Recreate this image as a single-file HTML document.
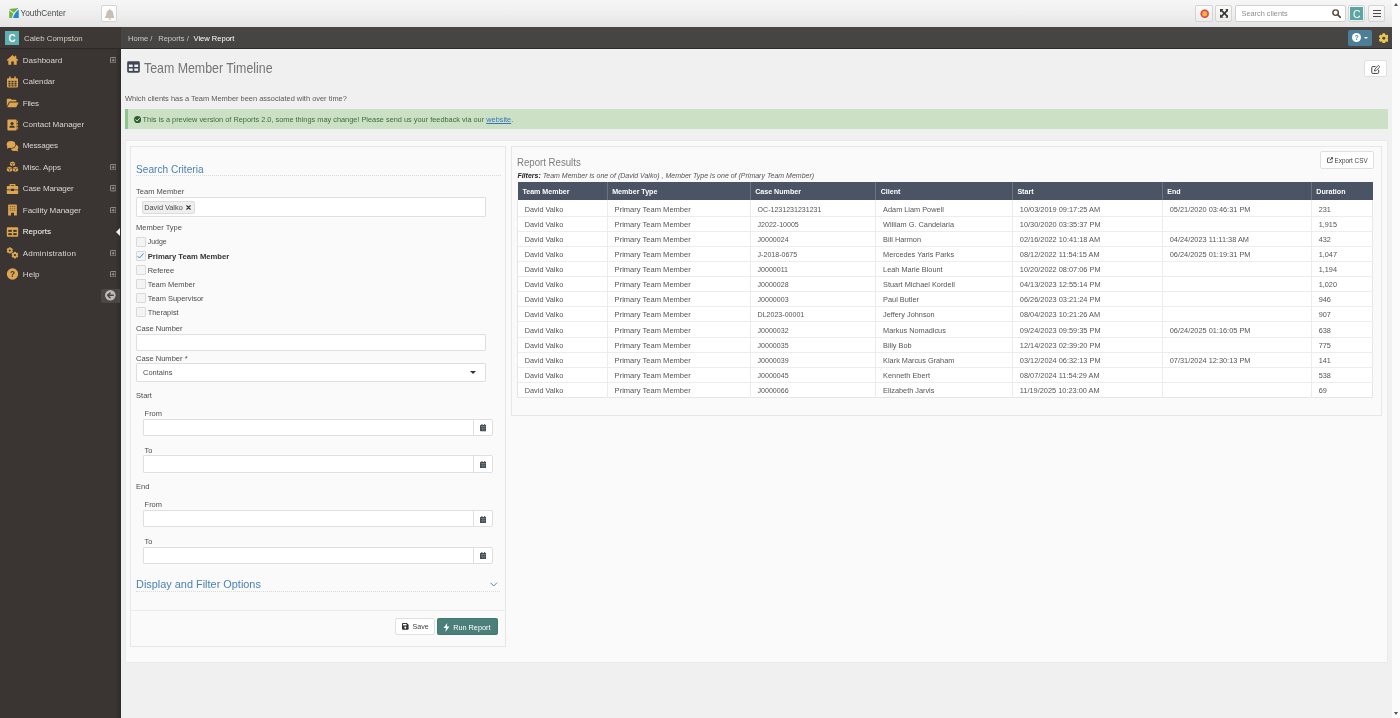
<!DOCTYPE html>
<html lang="en">
<head>
<meta charset="utf-8">
<title>Team Member Timeline</title>
<style>
*{box-sizing:border-box;margin:0;padding:0}
html,body{width:1400px;height:718px;overflow:hidden}
body{position:relative;will-change:transform;background:#f0f0f0;font-family:"Liberation Sans",sans-serif;font-size:7.4px;color:#4a4a4a;-webkit-font-smoothing:antialiased}
.abs{position:absolute}
.t{position:absolute;white-space:nowrap;line-height:1}
/* top bar */
#topbar{position:absolute;left:0;top:0;width:1392px;height:27px;background:linear-gradient(#f6f6f6,#efefef 50%,#e4e4e4)}
.tbtn{position:absolute;top:5px;height:16.5px;width:16.5px;border:1px solid #d4d4d4;border-radius:2px;background:linear-gradient(#fbfbfb,#ececec)}
/* sidebar */
#sidebar{position:absolute;left:0;top:27px;width:120.5px;height:691px;background:linear-gradient(90deg,#3a3532 0,#3a3532 116px,#2f2b29 120.5px)}
#userhdr{position:absolute;left:0;top:0;width:120.5px;height:21.5px;background:#3d3835;border-bottom:1px solid #2c2826}
.mi{position:absolute;left:22.8px;color:#d9d5d0;font-size:8.05px;white-space:nowrap;line-height:1}
.mi.act{color:#fff}
.ico{position:absolute;left:6px;width:13px;height:12px}
.plus{position:absolute;left:109.6px;width:6px;height:6px;border:1px solid #a9a49f;border-radius:1px}
.plus:before{content:"";position:absolute;left:0.5px;right:0.5px;top:1.5px;height:1px;background:#a9a49f}
.plus:after{content:"";position:absolute;top:0.5px;bottom:0.5px;left:1.5px;width:1px;background:#a9a49f}
/* breadcrumb */
#crumb{position:absolute;left:120.5px;top:27px;width:1271.5px;height:21.8px;background:#474543;border-bottom:1.5px solid #2d2b2a}
/* scrollbar */
#sb{position:absolute;left:1392px;top:0;width:8px;height:718px;background:#fbfbfb}
/* panels */
.panel{position:absolute;background:#fafafa;border:1px solid #e3e3e3}
.inp{position:absolute;background:#fff;border:1px solid #dfdfdf;border-radius:1px}
.lbl{position:absolute;white-space:nowrap;line-height:1;font-size:7.4px;color:#4c4c4c}
.cb{position:absolute;left:136px;width:9.5px;height:9.5px;border:1px solid #d9d9d9;background:#f4f4f4;border-radius:1px}
.calbtn{position:absolute;background:#fff;border:1px solid #dfdfdf;border-radius:0 2px 2px 0}
</style>
</head>
<body>
<div id="topbar">
<svg class="abs" style="left:8.7px;top:7.7px" width="9.9" height="9.9" viewBox="0 0 10 10"><path d="M0 1 L9.6 0 L5 4.7 Z" fill="#6cb33e"/><path d="M0.2 2.6 L4.4 5.6 L2.9 10 L0.2 10 Z" fill="#6cb33e"/><path d="M9.8 1.4 L9.9 10 L4.1 10 C4.8 6.6,7 3.6,9.8 1.4Z" fill="#1f8ad3"/></svg>
<div class="t" style="left:20.6px;top:9.6px;font-size:8.2px;color:#4a4a4a">YouthCenter</div>
<div class="tbtn" style="left:101px;top:5.2px;width:16.4px;height:16.4px;background:#fdfdfd"></div>
<svg class="abs" style="left:104.5px;top:8.6px" width="9.6" height="11" viewBox="0 0 448 512"><path fill="#c9bdb7" d="M224 0c-17.700 0-32 14.300-32 32v19.200C119 66 64 130.600 64 208v18.800c0 47-17.300 92.400-48.500 127.600l-7.400 8.300c-8.400 9.400-10.400 22.900-5.300 34.400S19.400 416 32 416h384c12.600 0 24-7.400 29.200-18.900s3.100-25-5.300-34.400l-7.400-8.300C401.300 319.200 384 273.900 384 226.800V208c0-77.400-55-142-128-156.800V32c0-17.700-14.300-32-32-32zm45.300 493.300c12-12 18.700-28.300 18.700-45.300H160c0 17 6.700 33.300 18.700 45.300s28.300 18.700 45.300 18.700s33.300-6.700 45.300-18.700z"/></svg>
<!-- right buttons -->
<div class="tbtn" style="left:1195.4px;width:17.3px"></div>
<svg class="abs" style="left:1199.5px;top:8.85px" width="9.4" height="9.4" viewBox="0 0 20 20"><circle cx="10" cy="10" r="10" fill="#cfe6ec"/><circle cx="10" cy="10" r="9" fill="#e2473b"/><circle cx="10" cy="10" r="5.6" fill="#f6a63c"/><path d="M15.5 5.2 C11 4.6,8 6.6,9 9.2 C10 11.6,12.4 11.4,11.4 13 C10.4 14.8,6.6 15.2,4.4 14.6 C8.6 16.6,12.8 14.6,12 11.4 C11.4 9,8.6 9.4,9.4 7.6 C10.2 6,13 5.4,15.5 5.2Z" fill="#fde9c8"/></svg>
<div class="tbtn" style="left:1215px;width:17.3px"></div>
<svg class="abs" style="left:1219.5px;top:9px" width="8.8" height="8.8" viewBox="0 0 16 16"><path d="M2.5 2.5 L13.5 13.5 M13.5 2.5 L2.5 13.5" stroke="#3a3632" stroke-width="3"/><g fill="#3a3632"><path d="M0 0 H6.4 L0 6.4Z"/><path d="M16 0 V6.4 L9.6 0Z"/><path d="M0 16 V9.6 L6.4 16Z"/><path d="M16 16 H9.6 L16 9.6Z"/></g></svg>
<div class="abs" style="left:1235.2px;top:5px;width:110.6px;height:16.5px;background:#fff;border:1px solid #d0d0d0;border-radius:2px"></div>
<div class="t" style="left:1241.5px;top:10.4px;font-size:7.36px;color:#8e8e8e">Search clients</div>
<svg class="abs" style="left:1332.1px;top:8.8px" width="9.2" height="9.2" viewBox="0 0 16 16"><circle cx="6.3" cy="6.3" r="4.8" fill="none" stroke="#54483c" stroke-width="2.5"/><path d="M10.2 10.2 L14.8 14.8" stroke="#54483c" stroke-width="2.9" stroke-linecap="round"/></svg>
<div class="tbtn" style="left:1348.1px"></div>
<div class="abs" style="left:1350.1px;top:7.1px;width:13.3px;height:13.4px;background:#5ba5a3"></div>
<div class="t" style="left:1353.2px;top:7.9px;font-size:11.6px;color:#fff;transform:scaleX(0.9);transform-origin:0 0">C</div>
<div class="tbtn" style="left:1368.3px"></div>
<div class="abs" style="left:1372.5px;top:9.7px;width:8px;height:1.2px;background:#4a4a4a"></div>
<div class="abs" style="left:1372.5px;top:12.8px;width:8px;height:1.2px;background:#4a4a4a"></div>
<div class="abs" style="left:1372.5px;top:15.9px;width:8px;height:1.2px;background:#4a4a4a"></div>
</div>
<div id="sidebar"><div id="userhdr">
<div class="abs" style="left:5.1px;top:4.1px;width:14.1px;height:14.1px;background:#5fb0b3"></div>
<div class="t" style="left:8.6px;top:6.6px;font-size:10px;font-weight:bold;color:#fff">C</div>
<div class="t" style="left:24px;top:7.5px;font-size:7.88px;color:#d6cec6">Caleb Compston</div>
</div>
<svg class="ico" style="left:5.8px;top:27.2px" width="11.6" height="11.6" viewBox="0 0 16 16"><path fill="#dea650" d="M8 1.2 L0.3 8 L1.4 9.2 L2.4 8.4 V14.4 H6.3 V10 H9.7 V14.4 H13.6 V8.4 L14.6 9.2 L15.7 8 L13 5.6 V2.2 H11.2 V4 Z"/></svg><div class="mi" style="top:30px;letter-spacing:0.013px">Dashboard</div><svg class="abs" style="left:110px;top:29.9px" width="6.4" height="6.4" viewBox="0 0 12 12"><rect x="0.9" y="0.9" width="10.2" height="10.2" rx="1.2" fill="none" stroke="#a9a49f" stroke-width="1.5"/><path d="M6 3.2 V8.8 M3.2 6 H8.8" stroke="#a9a49f" stroke-width="1.5"/></svg>
<svg class="ico" style="left:5.8px;top:48.5px" width="11.6" height="11.6" viewBox="0 0 16 16"><path fill="#dea650" d="M2 3 H14 A1.3 1.3 0 0 1 15.3 4.3 V14 A1.3 1.3 0 0 1 14 15.3 H2 A1.3 1.3 0 0 1 0.7 14 V4.3 A1.3 1.3 0 0 1 2 3Z M3.6 0.8 H5.6 V4 H3.6Z M10.4 0.8 H12.4 V4 H10.4Z"/><g fill="#3a3532"><rect x="2.6" y="6.4" width="2.7" height="2.1"/><rect x="6.65" y="6.4" width="2.7" height="2.1"/><rect x="10.7" y="6.4" width="2.7" height="2.1"/><rect x="2.6" y="9.3" width="2.7" height="2.1"/><rect x="6.65" y="9.3" width="2.7" height="2.1"/><rect x="10.7" y="9.3" width="2.7" height="2.1"/><rect x="2.6" y="12.2" width="2.7" height="1.8"/><rect x="6.65" y="12.2" width="2.7" height="1.8"/><rect x="10.7" y="12.2" width="2.7" height="1.8"/></g></svg><div class="mi" style="top:51px;letter-spacing:-0.072px">Calendar</div>
<svg class="ico" style="left:5.8px;top:70.0px" width="11.6" height="11.6" viewBox="0 0 16 16"><path fill="#dea650" d="M0.4 3.4 A1.2 1.2 0 0 1 1.6 2.2 H5.4 L7 3.8 H12 A1.2 1.2 0 0 1 13.2 5 V6 H4.6 A1.6 1.6 0 0 0 3.2 6.9 L0.4 12.2Z"/><path fill="#dea650" d="M4.4 7.2 H15.4 A0.6 0.6 0 0 1 15.9 8.1 L13.3 13 A1.4 1.4 0 0 1 12.1 13.8 H0.9 Z"/></svg><div class="mi" style="top:73px;letter-spacing:-0.219px">Files</div>
<svg class="ico" style="left:5.8px;top:91.6px" width="11.6" height="11.6" viewBox="0 0 16 16"><path fill="#dea650" d="M2.6 0.6 H12.2 A1.4 1.4 0 0 1 13.6 2 V14 A1.4 1.4 0 0 1 12.2 15.4 H2.6 A1.4 1.4 0 0 1 1.2 14 V2 A1.4 1.4 0 0 1 2.6 0.6Z M14.3 2.4 H15.4 V5.4 H14.3Z M14.3 6.5 H15.4 V9.5 H14.3Z M14.3 10.6 H15.4 V13.6 H14.3Z"/><circle cx="7.4" cy="6" r="2.1" fill="#3a3532"/><path fill="#3a3532" d="M3.8 11.8 A3.6 3 0 0 1 11 11.8 Z"/></svg><div class="mi" style="top:94px;letter-spacing:-0.024px">Contact Manager</div>
<svg class="ico" style="left:5.8px;top:112.9px" width="11.6" height="11.6" viewBox="0 0 16 16"><ellipse cx="6" cy="6" rx="5.8" ry="4.6" fill="#dea650"/><path fill="#dea650" d="M1.6 8 L0.4 11.6 L4.6 10Z"/><path fill="#dea650" d="M12.6 6.4 A4.6 4 0 0 1 15.8 10.4 A4 3.6 0 0 1 14.6 13 L15.7 15.4 L12.4 14.2 A5.2 4.2 0 0 1 5.6 11.6 A7 5.6 0 0 0 12.6 6.4Z"/></svg><div class="mi" style="top:115px;letter-spacing:-0.212px">Messages</div>
<svg class="ico" style="left:5.8px;top:134.2px" width="11.6" height="11.6" viewBox="0 0 16 16"><path fill="#dea650" d="M8 0.6 L11.4 1.9 V5.6 L8 7 L4.6 5.6 V1.9Z M4 7.6 L7.5 9 V13 L4 14.6 L0.5 13 V9Z M12 7.6 L15.5 9 V13 L12 14.6 L8.5 13 V9Z"/><path stroke="#3a3532" stroke-width="0.8" fill="none" d="M5 2.6 L8 3.8 L11 2.6 M8 3.8 V6.6 M1 9.6 L4 10.8 L7 9.6 M4 10.8 V14 M9 9.6 L12 10.8 L15 9.6 M12 10.8 V14"/></svg><div class="mi" style="top:137px;letter-spacing:-0.073px">Misc. Apps</div><svg class="abs" style="left:110px;top:136.9px" width="6.4" height="6.4" viewBox="0 0 12 12"><rect x="0.9" y="0.9" width="10.2" height="10.2" rx="1.2" fill="none" stroke="#a9a49f" stroke-width="1.5"/><path d="M6 3.2 V8.8 M3.2 6 H8.8" stroke="#a9a49f" stroke-width="1.5"/></svg>
<svg class="ico" style="left:5.8px;top:155.7px" width="11.6" height="11.6" viewBox="0 0 16 16"><path fill="#dea650" d="M5 1.4 H11 A1 1 0 0 1 12 2.4 V4 H14.6 A1 1 0 0 1 15.6 5 V8.6 H10 V7.8 H6 V8.6 H0.4 V5 A1 1 0 0 1 1.4 4 H4 V2.4 A1 1 0 0 1 5 1.4Z M5.8 3 V4 H10.2 V3Z M0.4 9.6 H6 V10.8 H10 V9.6 H15.6 V13.6 A1 1 0 0 1 14.6 14.6 H1.4 A1 1 0 0 1 0.4 13.6Z"/></svg><div class="mi" style="top:158px;letter-spacing:-0.176px">Case Manager</div><svg class="abs" style="left:110px;top:158.4px" width="6.4" height="6.4" viewBox="0 0 12 12"><rect x="0.9" y="0.9" width="10.2" height="10.2" rx="1.2" fill="none" stroke="#a9a49f" stroke-width="1.5"/><path d="M6 3.2 V8.8 M3.2 6 H8.8" stroke="#a9a49f" stroke-width="1.5"/></svg>
<svg class="ico" style="left:5.8px;top:177.1px" width="11.6" height="11.6" viewBox="0 0 16 16"><path fill="#dea650" d="M3.2 0.6 H12.8 A1 1 0 0 1 13.8 1.6 V15.4 H10 V11.6 H6 V15.4 H2.2 V1.6 A1 1 0 0 1 3.2 0.6Z"/><g fill="#3a3532" opacity="0.55"><rect x="4.2" y="2.4" width="2" height="1.4"/><rect x="7" y="2.4" width="2" height="1.4"/><rect x="9.8" y="2.4" width="2" height="1.4"/><rect x="4.2" y="5" width="2" height="1.4"/><rect x="7" y="5" width="2" height="1.4"/><rect x="9.8" y="5" width="2" height="1.4"/><rect x="4.2" y="7.6" width="2" height="1.4"/><rect x="7" y="7.6" width="2" height="1.4"/><rect x="9.8" y="7.6" width="2" height="1.4"/></g></svg><div class="mi" style="top:180px;letter-spacing:-0.054px">Facility Manager</div><svg class="abs" style="left:110px;top:179.8px" width="6.4" height="6.4" viewBox="0 0 12 12"><rect x="0.9" y="0.9" width="10.2" height="10.2" rx="1.2" fill="none" stroke="#a9a49f" stroke-width="1.5"/><path d="M6 3.2 V8.8 M3.2 6 H8.8" stroke="#a9a49f" stroke-width="1.5"/></svg>
<svg class="ico" style="left:5.8px;top:198.6px" width="11.6" height="11.6" viewBox="0 0 16 16"><path fill="#dea650" d="M1.8 1.6 H14.2 A1.4 1.4 0 0 1 15.6 3 V13 A1.4 1.4 0 0 1 14.2 14.4 H1.8 A1.4 1.4 0 0 1 0.4 13 V3 A1.4 1.4 0 0 1 1.8 1.6Z"/><g fill="#3a3532"><rect x="2.4" y="5.2" width="4.7" height="2.6"/><rect x="8.9" y="5.2" width="4.7" height="2.6"/><rect x="2.4" y="9.6" width="4.7" height="2.6"/><rect x="8.9" y="9.6" width="4.7" height="2.6"/></g></svg><div class="mi act" style="top:201px;letter-spacing:0.015px">Reports</div>
<svg class="ico" style="left:5.8px;top:220.0px" width="11.6" height="11.6" viewBox="0 0 16 16"><g fill="#dea650"><circle cx="4.4" cy="4.6" r="3.3"/><rect x="3.1" y="0.4" width="2.6" height="8.4" rx="0.6"/><rect x="3.1" y="0.4" width="2.6" height="8.4" rx="0.6" transform="rotate(60 4.4 4.6)"/><rect x="3.1" y="0.4" width="2.6" height="8.4" rx="0.6" transform="rotate(120 4.4 4.6)"/><circle cx="11.2" cy="10.8" r="3.6"/><rect x="9.8" y="6.2" width="2.8" height="9.2" rx="0.6"/><rect x="9.8" y="6.2" width="2.8" height="9.2" rx="0.6" transform="rotate(60 11.2 10.8)"/><rect x="9.8" y="6.2" width="2.8" height="9.2" rx="0.6" transform="rotate(120 11.2 10.8)"/></g><circle cx="4.4" cy="4.6" r="1.35" fill="#3a3532"/><circle cx="11.2" cy="10.8" r="1.55" fill="#3a3532"/></svg><div class="mi" style="top:223px;letter-spacing:0.164px">Administration</div><svg class="abs" style="left:110px;top:222.7px" width="6.4" height="6.4" viewBox="0 0 12 12"><rect x="0.9" y="0.9" width="10.2" height="10.2" rx="1.2" fill="none" stroke="#a9a49f" stroke-width="1.5"/><path d="M6 3.2 V8.8 M3.2 6 H8.8" stroke="#a9a49f" stroke-width="1.5"/></svg>
<svg class="ico" style="left:5.8px;top:241.3px" width="11.6" height="11.6" viewBox="0 0 16 16"><circle cx="8" cy="8" r="7.6" fill="#dea650"/><text x="8" y="12" font-family="Liberation Sans, sans-serif" font-size="11" font-weight="bold" text-anchor="middle" fill="#3a3532">?</text></svg><div class="mi" style="top:244px;letter-spacing:0.037px">Help</div><svg class="abs" style="left:110px;top:244.0px" width="6.4" height="6.4" viewBox="0 0 12 12"><rect x="0.9" y="0.9" width="10.2" height="10.2" rx="1.2" fill="none" stroke="#a9a49f" stroke-width="1.5"/><path d="M6 3.2 V8.8 M3.2 6 H8.8" stroke="#a9a49f" stroke-width="1.5"/></svg>
<div class="abs" style="left:116px;top:200.6px;width:0;height:0;border-top:4px solid transparent;border-bottom:4px solid transparent;border-right:4.5px solid #f0f0f0"></div>
<div class="abs" style="left:101.4px;top:261.7px;width:19.1px;height:14.7px;background:#4b4744;border-radius:2px 0 0 2px"></div>
<svg class="abs" style="left:105.3px;top:263.4px" width="10.6" height="10.6" viewBox="0 0 20 20"><circle cx="10" cy="10" r="10" fill="#bfbab5"/><path d="M15.5 10 H5.5 M9.5 5.5 L5 10 L9.5 14.5" stroke="#4b4744" stroke-width="2.8" fill="none" stroke-linecap="round" stroke-linejoin="round"/></svg>
</div>
<div id="crumb">
<div class="t" style="left:7.5px;top:8.1px;font-size:7.55px;color:#cfcac5">Home&nbsp;/</div><div class="t" style="left:37.7px;top:8.1px;font-size:7.55px;color:#cfcac5">Reports&nbsp;/</div><div class="t" style="left:73px;top:8.1px;font-size:7.55px;color:#fff">View Report</div>
<div class="abs" style="left:1227.4px;top:3.2px;width:24px;height:15.4px;background:#4c7f97;border-radius:2px"></div>
<div class="abs" style="left:1231.5px;top:6.4px;width:9px;height:9px;border-radius:50%;background:#fff"></div>
<div class="t" style="left:1234.2px;top:7.6px;font-size:6.6px;font-weight:bold;color:#4c7f97">?</div>
<div class="abs" style="left:1243.6px;top:10.4px;width:0;height:0;border-left:2px solid transparent;border-right:2px solid transparent;border-top:2.2px solid #fff"></div>
<svg class="abs" style="left:1258.3px;top:5.5px" width="9.6" height="10.6" viewBox="0 0 20 22"><g fill="#ecc650"><circle cx="10" cy="11" r="7.6"/><rect x="6.8" y="0.4" width="6.4" height="21.2" rx="1.6"/><rect x="6.8" y="0.4" width="6.4" height="21.2" rx="1.6" transform="rotate(60 10 11)"/><rect x="6.8" y="0.4" width="6.4" height="21.2" rx="1.6" transform="rotate(120 10 11)"/></g><circle cx="10" cy="11" r="3.1" fill="#474543"/></svg>
</div>
<div id="main">
<svg class="abs" style="left:127px;top:61.3px" width="13" height="12" viewBox="0 0 16 14.8"><path fill="#3f4552" d="M2 0.4 H14 A1.8 1.8 0 0 1 15.8 2.2 V12.6 A1.8 1.8 0 0 1 14 14.4 H2 A1.8 1.8 0 0 1 0.2 12.6 V2.2 A1.8 1.8 0 0 1 2 0.4Z"/><g fill="#f0f0f0"><rect x="2.3" y="4.4" width="4.7" height="3"/><rect x="9" y="4.4" width="4.7" height="3"/><rect x="2.3" y="9.2" width="4.7" height="3"/><rect x="9" y="9.2" width="4.7" height="3"/></g></svg>
<div class="t" style="left:144.4px;top:61.2px;font-size:14.2px;color:#747474;transform:scaleX(0.872);transform-origin:0 0">Team Member Timeline</div>
<div class="abs" style="left:1364.3px;top:60.3px;width:23.2px;height:17.2px;background:#fff;border:1px solid #e0e0e0;border-radius:2px"></div>
<svg class="abs" style="left:1371.2px;top:64.9px" width="9.2" height="9.2" viewBox="0 0 18 18"><path d="M8 3 H3.4 A1.9 1.9 0 0 0 1.5 4.9 V14.6 A1.9 1.9 0 0 0 3.4 16.5 H13.1 A1.9 1.9 0 0 0 15 14.6 V10" fill="none" stroke="#3c3c3c" stroke-width="1.9" stroke-linecap="round"/><path d="M13.2 1.6 A1.6 1.6 0 0 1 15.5 1.6 L16.4 2.5 A1.6 1.6 0 0 1 16.4 4.8 L10.2 11 L6.8 11.8 L7.5 8.3 Z" fill="none" stroke="#3c3c3c" stroke-width="1.7" stroke-linejoin="round"/></svg>
<div class="t" style="left:125px;top:94.8px;font-size:7.44px;color:#5a5a5a">Which clients has a Team Member been associated with over time?</div>
<div class="abs" style="left:125px;top:108.6px;width:1262.6px;height:20.8px;background:#cce0c5;border-left:3px solid #8dc68c"></div>
<svg class="abs" style="left:133.6px;top:115.9px" width="7.2" height="7.2" viewBox="0 0 16 16"><circle cx="8" cy="8" r="8" fill="#2d5e2f"/><path d="M4 8.4 L7 11.2 L12.2 5.4" stroke="#cce0c5" stroke-width="2.2" fill="none" stroke-linecap="round" stroke-linejoin="round"/></svg>
<div class="t" style="left:142.6px;top:116px;font-size:7.364px;color:#3d6b3f">This is a preview version of Reports 2.0, some things may change! Please send us your feedback via our <span style="color:#3a78b5;text-decoration:underline">website</span>.</div>
<div class="panel" style="left:125px;top:140.3px;width:1262.8px;height:522.6px;background:#fafafa;border-color:#ebebeb"></div>
<div class="panel" style="left:130.4px;top:145.8px;width:375.2px;height:501px;border-color:#e7e7e7"></div>
<div class="abs" style="left:131.4px;top:610px;width:373.2px;height:1px;background:#ececec"></div>
<div class="t" style="left:136px;top:164.4px;font-size:11.2px;color:#4a80b8;transform:scaleX(0.905);transform-origin:0 0">Search Criteria</div>
<div class="abs" style="left:136px;top:175.4px;width:364.6px;border-top:1px dotted #dadada"></div>
<div class="lbl" style="left:136px;top:188.4px;font-size:7.55px">Team Member</div>
<div class="inp" style="left:136px;top:197px;width:350.3px;height:19.6px"></div>
<div class="abs" style="left:141.6px;top:200.6px;width:53.2px;height:13px;background:#efefef;border:1px solid #dcdcdc;border-radius:2px"></div>
<div class="t" style="left:144.3px;top:203.5px;font-size:7.3px;color:#4a4a4a">David Valko</div>
<svg class="abs" style="left:185.6px;top:204.6px" width="5" height="5" viewBox="0 0 10 10"><path d="M1.5 1.5 L8.5 8.5 M8.5 1.5 L1.5 8.5" stroke="#333" stroke-width="2.2" stroke-linecap="round"/></svg>
<div class="lbl" style="left:136px;top:224px;font-size:7.55px">Member Type</div>
<div class="cb" style="top:237.0px"></div>
<div class="lbl" style="left:147.7px;top:238.4px;font-size:7.0px">Judge</div>
<div class="cb" style="top:251.2px"></div>
<svg class="abs" style="left:137.4px;top:252.8px" width="7" height="6" viewBox="0 0 14 12"><path d="M1.5 6.5 L5 10 L12.5 1.5" stroke="#3f7fc4" stroke-width="1.8" fill="none" stroke-linecap="round" stroke-linejoin="round"/></svg>
<div class="lbl" style="left:147.7px;top:252.6px;font-weight:bold;font-size:7.66px;color:#333">Primary Team Member</div>
<div class="cb" style="top:265.1px"></div>
<div class="lbl" style="left:147.7px;top:266.5px;font-size:7.45px">Referee</div>
<div class="cb" style="top:279.1px"></div>
<div class="lbl" style="left:147.7px;top:280.5px;font-size:7.45px">Team Member</div>
<div class="cb" style="top:293.2px"></div>
<div class="lbl" style="left:147.7px;top:294.6px;font-size:7.45px">Team Supervisor</div>
<div class="cb" style="top:307.2px"></div>
<div class="lbl" style="left:147.7px;top:308.6px;font-size:7.45px">Therapist</div>
<div class="lbl" style="left:136px;top:324.5px;font-size:7.55px">Case Number</div>
<div class="inp" style="left:136px;top:334px;width:350.3px;height:17.2px"></div>
<div class="lbl" style="left:136px;top:354.6px;font-size:7.55px">Case Number *</div>
<div class="inp" style="left:136px;top:363.4px;width:350.3px;height:18.7px"></div>
<div class="lbl" style="left:143.1px;top:368.6px;font-size:7.45px">Contains</div>
<div class="abs" style="left:470px;top:370.5px;width:0;height:0;border-left:3.1px solid transparent;border-right:3.1px solid transparent;border-top:3.3px solid #333"></div>
<div class="lbl" style="left:136px;top:391.9px;font-size:7.55px">Start</div>
<div class="lbl" style="left:144.6px;top:409.9px;font-size:7.45px">From</div>
<div class="inp" style="left:142.9px;top:418.9px;width:331.2px;height:17.2px;border-radius:1px 0 0 1px"></div>
<div class="calbtn" style="left:473.1px;top:418.9px;width:20px;height:17.2px"></div>
<svg class="abs" style="left:479.9px;top:424.3px" width="6.6" height="7.3" viewBox="0 0 12 13.2"><path fill="#444a52" d="M1.2 1.6 H10.8 A1.2 1.2 0 0 1 12 2.8 V12 A1.2 1.2 0 0 1 10.8 13.2 H1.2 A1.2 1.2 0 0 1 0 12 V2.8 A1.2 1.2 0 0 1 1.2 1.6Z M2.6 0 H4.4 V2.4 H2.6Z M7.6 0 H9.4 V2.4 H7.6Z"/><rect x="1.6" y="4.4" width="8.8" height="0.9" fill="#fff" opacity="0.55"/><path d="M1.6 8.6 H10.4 M4.4 5.6 V11.8 M7.6 5.6 V11.8" stroke="#fff" stroke-width="0.7" opacity="0.45"/></svg>
<div class="lbl" style="left:144.6px;top:446.8px;font-size:7.45px">To</div>
<div class="inp" style="left:142.9px;top:455.2px;width:331.2px;height:17.6px;border-radius:1px 0 0 1px"></div>
<div class="calbtn" style="left:473.1px;top:455.2px;width:20px;height:17.6px"></div>
<svg class="abs" style="left:479.9px;top:461.1px" width="6.6" height="7.3" viewBox="0 0 12 13.2"><path fill="#444a52" d="M1.2 1.6 H10.8 A1.2 1.2 0 0 1 12 2.8 V12 A1.2 1.2 0 0 1 10.8 13.2 H1.2 A1.2 1.2 0 0 1 0 12 V2.8 A1.2 1.2 0 0 1 1.2 1.6Z M2.6 0 H4.4 V2.4 H2.6Z M7.6 0 H9.4 V2.4 H7.6Z"/><rect x="1.6" y="4.4" width="8.8" height="0.9" fill="#fff" opacity="0.55"/><path d="M1.6 8.6 H10.4 M4.4 5.6 V11.8 M7.6 5.6 V11.8" stroke="#fff" stroke-width="0.7" opacity="0.45"/></svg>
<div class="lbl" style="left:136px;top:483.1px;font-size:7.55px">End</div>
<div class="lbl" style="left:144.6px;top:500.5px;font-size:7.45px">From</div>
<div class="inp" style="left:142.9px;top:510.3px;width:331.2px;height:17.2px;border-radius:1px 0 0 1px"></div>
<div class="calbtn" style="left:473.1px;top:510.3px;width:20px;height:17.2px"></div>
<svg class="abs" style="left:479.9px;top:515.7px" width="6.6" height="7.3" viewBox="0 0 12 13.2"><path fill="#444a52" d="M1.2 1.6 H10.8 A1.2 1.2 0 0 1 12 2.8 V12 A1.2 1.2 0 0 1 10.8 13.2 H1.2 A1.2 1.2 0 0 1 0 12 V2.8 A1.2 1.2 0 0 1 1.2 1.6Z M2.6 0 H4.4 V2.4 H2.6Z M7.6 0 H9.4 V2.4 H7.6Z"/><rect x="1.6" y="4.4" width="8.8" height="0.9" fill="#fff" opacity="0.55"/><path d="M1.6 8.6 H10.4 M4.4 5.6 V11.8 M7.6 5.6 V11.8" stroke="#fff" stroke-width="0.7" opacity="0.45"/></svg>
<div class="lbl" style="left:144.6px;top:537.6px;font-size:7.45px">To</div>
<div class="inp" style="left:142.9px;top:546.6px;width:331.2px;height:17.2px;border-radius:1px 0 0 1px"></div>
<div class="calbtn" style="left:473.1px;top:546.6px;width:20px;height:17.2px"></div>
<svg class="abs" style="left:479.9px;top:552.0px" width="6.6" height="7.3" viewBox="0 0 12 13.2"><path fill="#444a52" d="M1.2 1.6 H10.8 A1.2 1.2 0 0 1 12 2.8 V12 A1.2 1.2 0 0 1 10.8 13.2 H1.2 A1.2 1.2 0 0 1 0 12 V2.8 A1.2 1.2 0 0 1 1.2 1.6Z M2.6 0 H4.4 V2.4 H2.6Z M7.6 0 H9.4 V2.4 H7.6Z"/><rect x="1.6" y="4.4" width="8.8" height="0.9" fill="#fff" opacity="0.55"/><path d="M1.6 8.6 H10.4 M4.4 5.6 V11.8 M7.6 5.6 V11.8" stroke="#fff" stroke-width="0.7" opacity="0.45"/></svg>
<div class="t" style="left:136.2px;top:578.8px;font-size:11.2px;color:#4a80b8;transform:scaleX(0.975);transform-origin:0 0">Display and Filter Options</div>
<div class="abs" style="left:136px;top:590.8px;width:364px;border-top:1px dotted #dadada"></div>
<svg class="abs" style="left:490.4px;top:581.6px" width="7.4" height="5" viewBox="0 0 15 10"><path d="M1.5 2 L7.5 8 L13.5 2" stroke="#4a80b8" stroke-width="2" fill="none" stroke-linecap="round" stroke-linejoin="round"/></svg>
<div class="abs" style="left:395.4px;top:618px;width:39.2px;height:17.2px;background:#fff;border:1px solid #e0e0e0;border-radius:2px"></div>
<svg class="abs" style="left:402.2px;top:623.2px" width="6.6" height="6.8" viewBox="0 0 14 14"><path fill="#333" d="M1.6 0 H10.4 L14 3.4 V12.4 A1.6 1.6 0 0 1 12.4 14 H1.6 A1.6 1.6 0 0 1 0 12.4 V1.6 A1.6 1.6 0 0 1 1.6 0Z"/><rect x="2.2" y="1.8" width="7.4" height="3.2" fill="#fff"/><circle cx="7" cy="9.6" r="2.2" fill="#fff"/></svg>
<div class="t" style="left:412.6px;top:624px;font-size:7.1px;color:#444">Save</div>
<div class="abs" style="left:436.9px;top:618px;width:61.2px;height:17.2px;background:#4b7f7a;border:1px solid #457771;border-radius:1.5px"></div>
<svg class="abs" style="left:443.4px;top:622.5px" width="7" height="9" viewBox="0 0 11 15"><path fill="#fff" d="M6.8 0 L0.6 8.4 H4.8 L3.4 15 L10.4 5.8 H6 Z"/></svg>
<div class="t" style="left:453.2px;top:623.6px;font-size:7.3px;color:#fff">Run Report</div>
<div class="panel" style="left:511px;top:145.8px;width:871.2px;height:270.2px;border-color:#e7e7e7"></div>
<div class="t" style="left:517.3px;top:156.6px;font-size:10.6px;color:#7c7c7c;transform:scaleX(0.91);transform-origin:0 0">Report Results</div>
<div class="t" style="left:517.4px;top:172.1px;font-size:7.0px;font-style:italic;color:#555"><b style="color:#222">Filters:</b> Team Member is one of (David Valko) , Member Type is one of (Primary Team Member)</div>
<div class="abs" style="left:1320.4px;top:151.4px;width:53.3px;height:17.4px;background:#fff;border:1px solid #e0e0e0;border-radius:2px"></div>
<svg class="abs" style="left:1326.5px;top:157px" width="6.2" height="6.2" viewBox="0 0 14 14"><path d="M6 2.4 H2.6 A1.4 1.4 0 0 0 1.2 3.8 V11.4 A1.4 1.4 0 0 0 2.6 12.8 H10.2 A1.4 1.4 0 0 0 11.6 11.4 V8.4" fill="none" stroke="#333" stroke-width="1.8"/><path d="M8 0.6 H13.4 V6 L11.4 4 L7.2 8.2 L5.8 6.8 L10 2.6Z" fill="#333"/></svg>
<div class="t" style="left:1334.5px;top:157.8px;font-size:6.35px;color:#444">Export CSV</div>
<div class="abs" style="left:517.6px;top:182px;width:855.7px;height:18.4px;background:#4a5464"></div>
<div class="t" style="left:522.4px;top:188.7px;font-size:7.1px;font-weight:bold;color:#fff">Team Member</div>
<div class="t" style="left:612.2px;top:188.7px;font-size:7.1px;font-weight:bold;color:#fff">Member Type</div>
<div class="abs" style="left:606.9px;top:182px;width:1px;height:18.4px;background:#6b7280"></div>
<div class="t" style="left:755.2px;top:188.7px;font-size:7.1px;font-weight:bold;color:#fff">Case Number</div>
<div class="abs" style="left:749.9px;top:182px;width:1px;height:18.4px;background:#6b7280"></div>
<div class="t" style="left:880.7px;top:188.7px;font-size:7.1px;font-weight:bold;color:#fff">Client</div>
<div class="abs" style="left:875.4px;top:182px;width:1px;height:18.4px;background:#6b7280"></div>
<div class="t" style="left:1017.4px;top:188.7px;font-size:7.1px;font-weight:bold;color:#fff">Start</div>
<div class="abs" style="left:1012.1px;top:182px;width:1px;height:18.4px;background:#6b7280"></div>
<div class="t" style="left:1167.3px;top:188.7px;font-size:7.1px;font-weight:bold;color:#fff">End</div>
<div class="abs" style="left:1162.0px;top:182px;width:1px;height:18.4px;background:#6b7280"></div>
<div class="t" style="left:1316.3px;top:188.7px;font-size:7.1px;font-weight:bold;color:#fff">Duration</div>
<div class="abs" style="left:1311.0px;top:182px;width:1px;height:18.4px;background:#6b7280"></div>
<div class="abs" style="left:517px;top:200.4px;width:856.4px;height:197.6px;background:#fff;border:1px solid #e6e6e6;border-top:none"></div>
<div class="abs" style="left:606.9px;top:200.4px;width:1px;height:197.4px;background:#ececec"></div>
<div class="abs" style="left:749.9px;top:200.4px;width:1px;height:197.4px;background:#ececec"></div>
<div class="abs" style="left:875.4px;top:200.4px;width:1px;height:197.4px;background:#ececec"></div>
<div class="abs" style="left:1012.1px;top:200.4px;width:1px;height:197.4px;background:#ececec"></div>
<div class="abs" style="left:1162.0px;top:200.4px;width:1px;height:197.4px;background:#ececec"></div>
<div class="abs" style="left:1311.0px;top:200.4px;width:1px;height:197.4px;background:#ececec"></div>
<div class="abs" style="left:517.6px;top:215.7px;width:855.7px;height:1px;background:#ededed"></div>
<div class="t" style="left:524.8px;top:205.70px;font-size:7.3px;color:#555">David Valko</div>
<div class="t" style="left:614.6px;top:205.70px;font-size:7.55px;color:#555">Primary Team Member</div>
<div class="t" style="left:757.6px;top:205.70px;font-size:7.05px;color:#555">OC-1231231231231</div>
<div class="t" style="left:883.1px;top:205.70px;font-size:7.33px;color:#555">Adam Liam Powell</div>
<div class="t" style="left:1019.8px;top:205.70px;font-size:7.38px;color:#555">10/03/2019 09:17:25 AM</div>
<div class="t" style="left:1169.7px;top:205.70px;font-size:7.38px;color:#555">05/21/2020 03:46:31 PM</div>
<div class="t" style="left:1318.7px;top:205.70px;font-size:7.3px;color:#555">231</div>
<div class="abs" style="left:517.6px;top:230.8px;width:855.7px;height:1px;background:#ededed"></div>
<div class="t" style="left:524.8px;top:220.81px;font-size:7.3px;color:#555">David Valko</div>
<div class="t" style="left:614.6px;top:220.81px;font-size:7.55px;color:#555">Primary Team Member</div>
<div class="t" style="left:757.6px;top:220.81px;font-size:7.05px;color:#555">J2022-10005</div>
<div class="t" style="left:883.1px;top:220.81px;font-size:7.33px;color:#555">William G. Candelaria</div>
<div class="t" style="left:1019.8px;top:220.81px;font-size:7.38px;color:#555">10/30/2020 03:35:37 PM</div>
<div class="t" style="left:1318.7px;top:220.81px;font-size:7.3px;color:#555">1,915</div>
<div class="abs" style="left:517.6px;top:245.9px;width:855.7px;height:1px;background:#ededed"></div>
<div class="t" style="left:524.8px;top:235.92px;font-size:7.3px;color:#555">David Valko</div>
<div class="t" style="left:614.6px;top:235.92px;font-size:7.55px;color:#555">Primary Team Member</div>
<div class="t" style="left:757.6px;top:235.92px;font-size:7.05px;color:#555">J0000024</div>
<div class="t" style="left:883.1px;top:235.92px;font-size:7.33px;color:#555">Bill Harmon</div>
<div class="t" style="left:1019.8px;top:235.92px;font-size:7.38px;color:#555">02/16/2022 10:41:18 AM</div>
<div class="t" style="left:1169.7px;top:235.92px;font-size:7.38px;color:#555">04/24/2023 11:11:38 AM</div>
<div class="t" style="left:1318.7px;top:235.92px;font-size:7.3px;color:#555">432</div>
<div class="abs" style="left:517.6px;top:261.0px;width:855.7px;height:1px;background:#ededed"></div>
<div class="t" style="left:524.8px;top:251.03px;font-size:7.3px;color:#555">David Valko</div>
<div class="t" style="left:614.6px;top:251.03px;font-size:7.55px;color:#555">Primary Team Member</div>
<div class="t" style="left:757.6px;top:251.03px;font-size:7.05px;color:#555">J-2018-0675</div>
<div class="t" style="left:883.1px;top:251.03px;font-size:7.33px;color:#555">Mercedes Yaris Parks</div>
<div class="t" style="left:1019.8px;top:251.03px;font-size:7.38px;color:#555">08/12/2022 11:54:15 AM</div>
<div class="t" style="left:1169.7px;top:251.03px;font-size:7.38px;color:#555">06/24/2025 01:19:31 PM</div>
<div class="t" style="left:1318.7px;top:251.03px;font-size:7.3px;color:#555">1,047</div>
<div class="abs" style="left:517.6px;top:276.1px;width:855.7px;height:1px;background:#ededed"></div>
<div class="t" style="left:524.8px;top:266.14px;font-size:7.3px;color:#555">David Valko</div>
<div class="t" style="left:614.6px;top:266.14px;font-size:7.55px;color:#555">Primary Team Member</div>
<div class="t" style="left:757.6px;top:266.14px;font-size:7.05px;color:#555">J0000011</div>
<div class="t" style="left:883.1px;top:266.14px;font-size:7.33px;color:#555">Leah Marie Blount</div>
<div class="t" style="left:1019.8px;top:266.14px;font-size:7.38px;color:#555">10/20/2022 08:07:06 PM</div>
<div class="t" style="left:1318.7px;top:266.14px;font-size:7.3px;color:#555">1,194</div>
<div class="abs" style="left:517.6px;top:291.2px;width:855.7px;height:1px;background:#ededed"></div>
<div class="t" style="left:524.8px;top:281.25px;font-size:7.3px;color:#555">David Valko</div>
<div class="t" style="left:614.6px;top:281.25px;font-size:7.55px;color:#555">Primary Team Member</div>
<div class="t" style="left:757.6px;top:281.25px;font-size:7.05px;color:#555">J0000028</div>
<div class="t" style="left:883.1px;top:281.25px;font-size:7.33px;color:#555">Stuart Michael Kordell</div>
<div class="t" style="left:1019.8px;top:281.25px;font-size:7.38px;color:#555">04/13/2023 12:55:14 PM</div>
<div class="t" style="left:1318.7px;top:281.25px;font-size:7.3px;color:#555">1,020</div>
<div class="abs" style="left:517.6px;top:306.3px;width:855.7px;height:1px;background:#ededed"></div>
<div class="t" style="left:524.8px;top:296.36px;font-size:7.3px;color:#555">David Valko</div>
<div class="t" style="left:614.6px;top:296.36px;font-size:7.55px;color:#555">Primary Team Member</div>
<div class="t" style="left:757.6px;top:296.36px;font-size:7.05px;color:#555">J0000003</div>
<div class="t" style="left:883.1px;top:296.36px;font-size:7.33px;color:#555">Paul Butler</div>
<div class="t" style="left:1019.8px;top:296.36px;font-size:7.38px;color:#555">06/26/2023 03:21:24 PM</div>
<div class="t" style="left:1318.7px;top:296.36px;font-size:7.3px;color:#555">946</div>
<div class="abs" style="left:517.6px;top:321.4px;width:855.7px;height:1px;background:#ededed"></div>
<div class="t" style="left:524.8px;top:311.47px;font-size:7.3px;color:#555">David Valko</div>
<div class="t" style="left:614.6px;top:311.47px;font-size:7.55px;color:#555">Primary Team Member</div>
<div class="t" style="left:757.6px;top:311.47px;font-size:7.05px;color:#555">DL2023-00001</div>
<div class="t" style="left:883.1px;top:311.47px;font-size:7.33px;color:#555">Jeffery Johnson</div>
<div class="t" style="left:1019.8px;top:311.47px;font-size:7.38px;color:#555">08/04/2023 10:21:26 AM</div>
<div class="t" style="left:1318.7px;top:311.47px;font-size:7.3px;color:#555">907</div>
<div class="abs" style="left:517.6px;top:336.5px;width:855.7px;height:1px;background:#ededed"></div>
<div class="t" style="left:524.8px;top:326.58px;font-size:7.3px;color:#555">David Valko</div>
<div class="t" style="left:614.6px;top:326.58px;font-size:7.55px;color:#555">Primary Team Member</div>
<div class="t" style="left:757.6px;top:326.58px;font-size:7.05px;color:#555">J0000032</div>
<div class="t" style="left:883.1px;top:326.58px;font-size:7.33px;color:#555">Markus Nomadicus</div>
<div class="t" style="left:1019.8px;top:326.58px;font-size:7.38px;color:#555">09/24/2023 09:59:35 PM</div>
<div class="t" style="left:1169.7px;top:326.58px;font-size:7.38px;color:#555">06/24/2025 01:16:05 PM</div>
<div class="t" style="left:1318.7px;top:326.58px;font-size:7.3px;color:#555">638</div>
<div class="abs" style="left:517.6px;top:351.6px;width:855.7px;height:1px;background:#ededed"></div>
<div class="t" style="left:524.8px;top:341.69px;font-size:7.3px;color:#555">David Valko</div>
<div class="t" style="left:614.6px;top:341.69px;font-size:7.55px;color:#555">Primary Team Member</div>
<div class="t" style="left:757.6px;top:341.69px;font-size:7.05px;color:#555">J0000035</div>
<div class="t" style="left:883.1px;top:341.69px;font-size:7.33px;color:#555">Billy Bob</div>
<div class="t" style="left:1019.8px;top:341.69px;font-size:7.38px;color:#555">12/14/2023 02:39:20 PM</div>
<div class="t" style="left:1318.7px;top:341.69px;font-size:7.3px;color:#555">775</div>
<div class="abs" style="left:517.6px;top:366.7px;width:855.7px;height:1px;background:#ededed"></div>
<div class="t" style="left:524.8px;top:356.80px;font-size:7.3px;color:#555">David Valko</div>
<div class="t" style="left:614.6px;top:356.80px;font-size:7.55px;color:#555">Primary Team Member</div>
<div class="t" style="left:757.6px;top:356.80px;font-size:7.05px;color:#555">J0000039</div>
<div class="t" style="left:883.1px;top:356.80px;font-size:7.33px;color:#555">Klark Marcus Graham</div>
<div class="t" style="left:1019.8px;top:356.80px;font-size:7.38px;color:#555">03/12/2024 06:32:13 PM</div>
<div class="t" style="left:1169.7px;top:356.80px;font-size:7.38px;color:#555">07/31/2024 12:30:13 PM</div>
<div class="t" style="left:1318.7px;top:356.80px;font-size:7.3px;color:#555">141</div>
<div class="abs" style="left:517.6px;top:381.8px;width:855.7px;height:1px;background:#ededed"></div>
<div class="t" style="left:524.8px;top:371.91px;font-size:7.3px;color:#555">David Valko</div>
<div class="t" style="left:614.6px;top:371.91px;font-size:7.55px;color:#555">Primary Team Member</div>
<div class="t" style="left:757.6px;top:371.91px;font-size:7.05px;color:#555">J0000045</div>
<div class="t" style="left:883.1px;top:371.91px;font-size:7.33px;color:#555">Kenneth Ebert</div>
<div class="t" style="left:1019.8px;top:371.91px;font-size:7.38px;color:#555">08/07/2024 11:54:29 AM</div>
<div class="t" style="left:1318.7px;top:371.91px;font-size:7.3px;color:#555">538</div>
<div class="t" style="left:524.8px;top:387.02px;font-size:7.3px;color:#555">David Valko</div>
<div class="t" style="left:614.6px;top:387.02px;font-size:7.55px;color:#555">Primary Team Member</div>
<div class="t" style="left:757.6px;top:387.02px;font-size:7.05px;color:#555">J0000066</div>
<div class="t" style="left:883.1px;top:387.02px;font-size:7.33px;color:#555">Elizabeth Jarvis</div>
<div class="t" style="left:1019.8px;top:387.02px;font-size:7.38px;color:#555">11/19/2025 10:23:00 AM</div>
<div class="t" style="left:1318.7px;top:387.02px;font-size:7.3px;color:#555">69</div>
</div>
<div id="sb"><div class="abs" style="left:1.6px;top:3.3px;width:0;height:0;border-left:2.5px solid transparent;border-right:2.5px solid transparent;border-bottom:3.2px solid #505050"></div><div class="abs" style="left:1.6px;top:711.8px;width:0;height:0;border-left:2.5px solid transparent;border-right:2.5px solid transparent;border-top:3.2px solid #505050"></div></div>
</body>
</html>
